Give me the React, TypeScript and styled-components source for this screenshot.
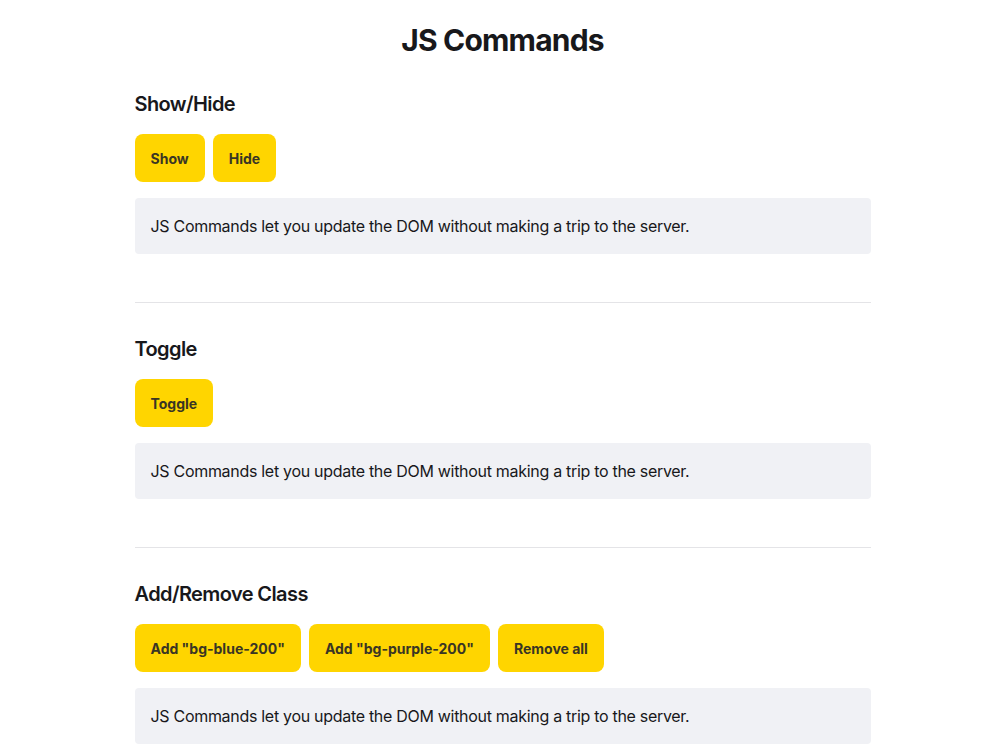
import styled, { createGlobalStyle } from "styled-components";

const GlobalStyle = createGlobalStyle`
  body {
    margin: 0;
    padding-left: 10px;
    background: #fff;
    font-family: Inter, "Noto Sans", sans-serif;
    color: #18181b;
  }
`;

const Page = styled.main`
  width: 736px;
  margin: 0 auto;
  padding-top: 22px;
`;

const Title = styled.h1`
  margin: 0 0 32px;
  font-size: 30px;
  line-height: 36px;
  font-weight: 700;
  letter-spacing: -0.8px;
  text-align: center;
`;

const Section = styled.section`
  display: flex;
  flex-direction: column;
  gap: 16px;
`;

const Heading = styled.h2`
  margin: 0;
  font-size: 20px;
  line-height: 28px;
  font-weight: 600;
  letter-spacing: -0.6px;
`;

const ButtonRow = styled.div`
  display: flex;
  gap: 8px;
`;

const Button = styled.button`
  height: 48px;
  padding: 0 16px;
  border: none;
  border-radius: 8px;
  background: #ffd500;
  color: #3a3524;
  font-family: inherit;
  font-size: 14px;
  font-weight: 700;
  cursor: pointer;
`;

const Note = styled.div`
  padding: 16px;
  border-radius: 4px;
  background: #f0f1f5;
  font-size: 16px;
  line-height: 24px;
  letter-spacing: -0.3px;
`;

const Divider = styled.hr`
  margin: 48px 0 32px;
  border: none;
  border-top: 1px solid #e4e4e7;
`;

const message = "JS Commands let you update the DOM without making a trip to the server.";

const sections = [
  { title: "Show/Hide", buttons: ["Show", "Hide"] },
  { title: "Toggle", buttons: ["Toggle"] },
  {
    title: "Add/Remove Class",
    buttons: ['Add "bg-blue-200"', 'Add "bg-purple-200"', "Remove all"],
  },
];

const App = () => {
  return (
    <>
      <GlobalStyle />
      <Page>
        <Title>JS Commands</Title>
        {sections.map((section, i) => (
          <div key={section.title}>
            {i > 0 && <Divider />}
            <Section>
              <Heading>{section.title}</Heading>
              <ButtonRow>
                {section.buttons.map((label) => (
                  <Button key={label}>{label}</Button>
                ))}
              </ButtonRow>
              <Note>{message}</Note>
            </Section>
          </div>
        ))}
      </Page>
    </>
  );
};

export default App;
